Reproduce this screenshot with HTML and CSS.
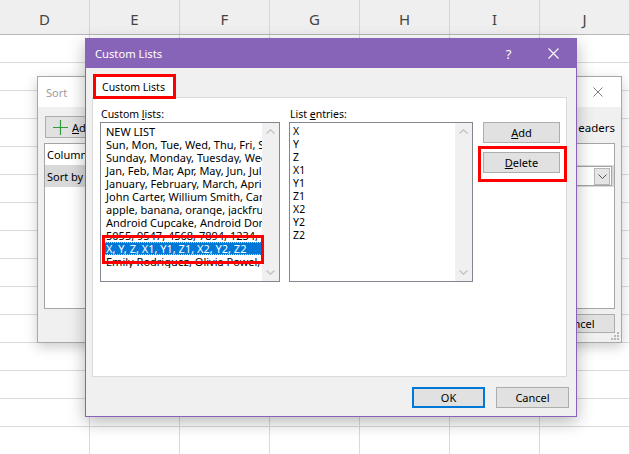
FILE: index.html
```html
<!DOCTYPE html>
<html lang="en">
<head>
<meta charset="utf-8">
<title>Custom Lists</title>
<link rel="stylesheet" href="styles.css">
</head>
<body>
<div class="sheet">
  <div class="colheads">
    <div class="ch">D</div><div class="ch">E</div><div class="ch">F</div><div class="ch">G</div><div class="ch">H</div><div class="ch">I</div><div class="ch">J</div>
  </div>
  <div class="grid"></div>
</div>

<div class="win sort">
  <div class="sort-title">
    <span>Sort</span>
    <svg class="sort-close" width="10" height="10" viewBox="0 0 10 10"><path d="M0.5 0.5L9.5 9.5M9.5 0.5L0.5 9.5" stroke="#7a7a7a" stroke-width="1" fill="none"/></svg>
  </div>
  <div class="sort-body">
    <div class="sort-top">
      <div class="btn btn-addlevel"><svg width="15" height="15" viewBox="0 0 15 15"><path d="M7.5 0V15M0 7.5H15" stroke="#2f9a3a" stroke-width="1.2" fill="none"/></svg><span><u>A</u>dd Level</span></div>
      <div class="hdrs"><span class="chk"></span>My data has <u>h</u>eaders</div>
    </div>
    <div class="sort-box">
      <div class="sort-head">Column</div>
      <div class="sort-row">
        <span>Sort by</span>
        <span class="combo"><span class="combo-btn"><svg width="9" height="5" viewBox="0 0 9 5"><path d="M0.5 0.5L4.5 4.5L8.5 0.5" stroke="#555" stroke-width="1" fill="none"/></svg></span></span>
      </div>
    </div>
    <div class="sort-foot">
      <div class="btn btn-sort">OK</div>
      <div class="btn btn-sort">Cancel</div>
    </div>
  </div>
  <svg class="grip" width="8" height="8" viewBox="0 0 8 8"><g fill="#b9b9b9"><rect x="6" y="0" width="2" height="2"/><rect x="3" y="3" width="2" height="2"/><rect x="6" y="3" width="2" height="2"/><rect x="0" y="6" width="2" height="2"/><rect x="3" y="6" width="2" height="2"/><rect x="6" y="6" width="2" height="2"/></g></svg>
</div>

<div class="win cl">
  <div class="cl-title">
    <span class="cl-title-text">Custom Lists</span>
    <span class="cap-btn cap-help">?</span>
    <span class="cap-btn"><svg width="11" height="11" viewBox="0 0 11 11"><path d="M0.5 0.5L10.5 10.5M10.5 0.5L0.5 10.5" stroke="#fff" stroke-width="1.1" fill="none"/></svg></span>
  </div>
  <div class="cl-body">
    <div class="tabs"><div class="tab">Custom Lists</div></div>
    <div class="panel">
      <div class="col col-lists">
        <div class="lbl">Custom <u>l</u>ists:</div>
        <div class="listbox">
          <div class="items">
            <div class="item">NEW LIST</div>
            <div class="item">Sun, Mon, Tue, Wed, Thu, Fri, Sat</div>
            <div class="item">Sunday, Monday, Tuesday, Wednesday, Thursday</div>
            <div class="item">Jan, Feb, Mar, Apr, May, Jun, Jul, Aug, Sep</div>
            <div class="item">January, February, March, April, May, June</div>
            <div class="item">John Carter, Willium Smith, Carlos Diaz</div>
            <div class="item">apple, banana, orange, jackfruit, mango</div>
            <div class="item">Android Cupcake, Android Donut, Android Eclair</div>
            <div class="item">5055, 9547, 4568, 7894, 1234, 1111</div>
            <div class="item item-sel">X, Y, Z, X1, Y1, Z1, X2, Y2, Z2</div>
            <div class="item">Emily Rodriguez, Olivia Powel, James Lee</div>
          </div>
          <div class="vscroll">
            <span class="arrow"><svg width="9" height="5" viewBox="0 0 9 5"><path d="M0.5 4.5L4.5 0.8L8.5 4.5" stroke="#c2c2c2" stroke-width="1.3" fill="none"/></svg></span>
            <span class="arrow"><svg width="9" height="5" viewBox="0 0 9 5"><path d="M0.5 0.5L4.5 4.2L8.5 0.5" stroke="#c2c2c2" stroke-width="1.3" fill="none"/></svg></span>
          </div>
          <div class="mark mark-sel"></div>
        </div>
      </div>
      <div class="col col-entries">
        <div class="lbl">List <u>e</u>ntries:</div>
        <div class="listbox">
          <div class="items items-entries">
            <div class="entry">X</div>
            <div class="entry">Y</div>
            <div class="entry">Z</div>
            <div class="entry">X1</div>
            <div class="entry">Y1</div>
            <div class="entry">Z1</div>
            <div class="entry">X2</div>
            <div class="entry">Y2</div>
            <div class="entry">Z2</div>
          </div>
          <div class="vscroll">
            <span class="arrow"><svg width="9" height="5" viewBox="0 0 9 5"><path d="M0.5 4.5L4.5 0.8L8.5 4.5" stroke="#c2c2c2" stroke-width="1.3" fill="none"/></svg></span>
            <span class="arrow"><svg width="9" height="5" viewBox="0 0 9 5"><path d="M0.5 0.5L4.5 4.2L8.5 0.5" stroke="#c2c2c2" stroke-width="1.3" fill="none"/></svg></span>
          </div>
        </div>
      </div>
      <div class="col col-btns">
        <div class="btn btn-side"><span><u>A</u>dd</span></div>
        <div class="btn btn-side btn-delete"><span><u>D</u>elete</span><div class="mark mark-del"></div></div>
      </div>
    </div>
    <div class="cl-foot">
      <div class="btn btn-foot btn-ok">OK</div>
      <div class="btn btn-foot">Cancel</div>
    </div>
  </div>
</div>
</body>
</html>
```

FILE: styles.css
```css
html, body {
  margin: 0;
  padding: 0;
}
body {
  width: 630px;
  height: 454px;
  overflow: hidden;
  position: relative;
  background: #ffffff;
  font-family: "Noto Sans", "Open Sans", sans-serif;
  color: #000;
}

/* spreadsheet background */
.sheet {
  display: flex;
  flex-direction: column;
  height: 454px;
}
.colheads {
  display: grid;
  grid-template-columns: repeat(7, 90px);
  height: 34px;
  background: #efefef;
  border-bottom: 1px solid #b7b7b7;
}
.ch {
  border-right: 1px solid #d6d6d6;
  text-align: center;
  font-size: 15px;
  color: #444;
  padding-top: 9px;
  line-height: 20px;
}
.grid {
  flex: 1;
  background-color: #fff;
  background-image:
    linear-gradient(to right, #dadada 1px, transparent 1px),
    linear-gradient(to bottom, #dadada 1px, transparent 1px);
  background-size: 90px 28px;
  background-position: 89px 27px;
}

/* windows */
.win {
  position: absolute;
  box-sizing: border-box;
  display: flex;
  flex-direction: column;
}
.btn {
  box-sizing: border-box;
  background: #e1e1e1;
  border: 1px solid #adadad;
  font-size: 11px;
  color: #000;
  display: flex;
  align-items: center;
  justify-content: center;
}

/* Sort dialog (behind) */
.sort {
  left: 37px;
  top: 76px;
  width: 585px;
  height: 267px;
  border: 1px solid #a8a8a8;
  background: #f0f0f0;
  box-shadow: 0 4px 12px rgba(0, 0, 0, 0.2);
}
.sort-title {
  height: 30px;
  background: #ffffff;
  display: flex;
  align-items: center;
  justify-content: space-between;
  padding: 0 18px 0 8px;
  color: #9b9b9b;
  font-size: 11px;
}
.sort-body {
  flex: 1;
  padding: 9px 6px 9px 6px;
  display: flex;
  flex-direction: column;
  gap: 5px;
}
.sort-top {
  height: 22px;
  display: flex;
  justify-content: space-between;
  align-items: center;
}
.btn-addlevel {
  margin-left: 1px;
  width: 96px;
  height: 22px;
  justify-content: flex-start;
  padding-left: 7px;
  gap: 4px;
}
.hdrs {
  font-size: 11.5px;
  margin-right: 0;
  display: flex;
  align-items: center;
  gap: 5px;
}
.chk {
  width: 12px;
  height: 12px;
  box-sizing: border-box;
  border: 1px solid #333;
  background: #fff;
}
.sort-box {
  height: 166px;
  box-sizing: border-box;
  background: #fff;
  border: 1px solid #a5a5a5;
}
.sort-head {
  height: 21px;
  line-height: 21px;
  padding-left: 2px;
  font-size: 11px;
}
.sort-row {
  height: 22px;
  background: #d9d9d9;
  display: flex;
  align-items: center;
  justify-content: space-between;
  padding: 0 2px;
  font-size: 11px;
}
.combo {
  width: 150px;
  height: 20px;
  box-sizing: border-box;
  background: #fff;
  border: 1px solid #a5a5a5;
  display: flex;
  justify-content: flex-end;
  padding: 1px 1px 0 0;
}
.combo-btn {
  width: 16px;
  height: 17px;
  box-sizing: border-box;
  background: #e5e5e5;
  border: 1px solid #b5b5b5;
  display: flex;
  align-items: center;
  justify-content: center;
}
.sort-foot {
  display: flex;
  justify-content: flex-end;
  gap: 7px;
}
.btn-sort {
  width: 75px;
  height: 19px;
}
.grip {
  position: absolute;
  right: 2px;
  bottom: 2px;
}

/* Custom Lists dialog */
.cl {
  left: 85px;
  top: 38px;
  width: 492px;
  height: 379px;
  border: 1px solid #8764b8;
  background: #f0f0f0;
  box-shadow: 0 5px 16px rgba(0, 0, 0, 0.28);
}
.cl-title {
  height: 29px;
  background: #8764b8;
  color: #fff;
  display: flex;
  align-items: center;
  padding-left: 9px;
  font-size: 11.2px;
}
.cl-title-text {
  flex: 1;
}
.cap-btn {
  width: 45px;
  height: 29px;
  display: flex;
  align-items: center;
  justify-content: center;
}
.cap-help {
  font-size: 13px;
}
.cl-body {
  flex: 1;
  padding: 6px 9px 8px 6px;
  display: flex;
  flex-direction: column;
}
.tabs {
  display: flex;
  padding-left: 1px;
  margin-bottom: -2px;
  position: relative;
  z-index: 1;
}
.tab {
  width: 83px;
  height: 25px;
  box-sizing: border-box;
  border: 3px solid #ff0000;
  background: #fff;
  padding-left: 6px;
  font-size: 10.5px;
  line-height: 20px;
  white-space: nowrap;
}
.panel {
  height: 280px;
  box-sizing: border-box;
  background: #fff;
  border: 1px solid #dadada;
  padding: 8px 0 0 7px;
  display: flex;
}
.col {
  display: flex;
  flex-direction: column;
}
.col-lists {
  width: 180px;
}
.col-entries {
  width: 184px;
  margin-left: 9px;
}
.col-btns {
  width: 77px;
  margin-left: 10px;
  padding-top: 16px;
  gap: 9px;
}
.lbl {
  height: 16px;
  line-height: 16px;
  font-size: 10.5px;
  padding-left: 1px;
}
.listbox {
  position: relative;
  height: 160px;
  box-sizing: border-box;
  border: 1px solid #828790;
  background: #fff;
  display: flex;
}
.items {
  flex: 1;
  min-width: 0;
  padding: 2px 0 0 3px;
  overflow: hidden;
}
.item {
  height: 13px;
  line-height: 13px;
  font-size: 11px;
  padding-left: 2px;
  white-space: nowrap;
  overflow: hidden;
}
.item-sel {
  background: #0078d7;
  color: #fff;
  outline: 1px dotted #f6c98d;
  outline-offset: -1px;
}
.entry {
  height: 13px;
  line-height: 13px;
  font-size: 10.5px;
}
.vscroll {
  width: 17px;
  background: #f0f0f0;
  display: flex;
  flex-direction: column;
  justify-content: space-between;
}
.arrow {
  height: 17px;
  display: flex;
  align-items: center;
  justify-content: center;
}
.btn-side {
  height: 21px;
  position: relative;
}
.cl-foot {
  margin-top: 10px;
  margin-right: -2px;
  display: flex;
  justify-content: flex-end;
  gap: 11px;
}
.btn-foot {
  width: 73px;
  height: 21px;
}
.btn-ok {
  border: 2px solid #0078d7;
}

/* red annotation frames */
.mark {
  position: absolute;
  box-sizing: border-box;
  border: 3px solid #ff0000;
  pointer-events: none;
}
.mark-sel {
  left: 1px;
  top: 112px;
  width: 162px;
  height: 29px;
}
.mark-del {
  left: -6px;
  top: -7px;
  right: -8px;
  bottom: -10px;
}
```
